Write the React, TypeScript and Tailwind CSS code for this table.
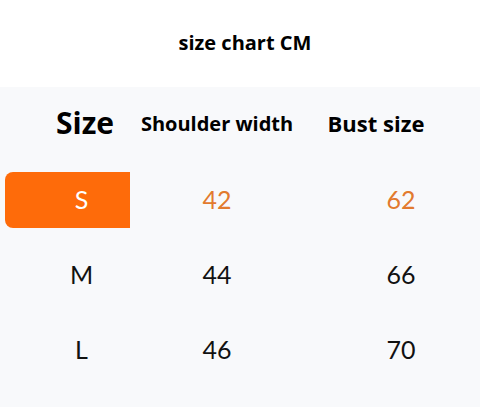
import React from 'react'

const rows = [
  { size: 'S', shoulder: '42', bust: '62', active: true },
  { size: 'M', shoulder: '44', bust: '66', active: false },
  { size: 'L', shoulder: '46', bust: '70', active: false },
]

export default function App() {
  return (
    <div className="w-[480px] h-[407px] bg-white overflow-hidden font-['Open_Sans',sans-serif]">
      {/* Title */}
      <div className="h-[87px] flex items-center justify-center pb-[2px]">
        <h1 className="text-[20px] font-bold text-black pl-[10px]">size chart CM</h1>
      </div>

      {/* Table */}
      <div className="h-[320px] bg-[#f8f9fb] pt-[8px] flex flex-col gap-[19px]">
        <div className="flex h-[55px] mb-[3px] items-center text-black font-bold whitespace-nowrap">
          <div className="w-[166px] flex justify-center pl-[4px] text-[30px]">Size</div>
          <div className="w-[102px] flex justify-center text-[20px] pt-[2px]">Shoulder width</div>
          <div className="w-[212px] flex justify-center pl-[4px] text-[22px] pt-[2px]">Bust size</div>
        </div>

        {rows.map((row) => (
          <div
            key={row.size}
            className="flex h-[56px] items-center font-['Lato',sans-serif] text-[25px] text-[#111]"
          >
            <div className="w-[166px] h-full flex items-center">
              <div
                className={
                  row.active
                    ? 'ml-[5px] w-[125px] h-full rounded-l-[8px] bg-[#fe6b0a] text-white flex items-center justify-center pl-[28px]'
                    : 'ml-[5px] w-[125px] h-full flex items-center justify-center pl-[28px]'
                }
              >
                {row.size}
              </div>
            </div>
            <div className={row.active ? 'w-[102px] flex justify-center text-[#e27a2e]' : 'w-[102px] flex justify-center'}>
              {row.shoulder}
            </div>
            <div
              className={
                row.active
                  ? 'w-[212px] flex justify-center pl-[54px] text-[#e27a2e]'
                  : 'w-[212px] flex justify-center pl-[54px]'
              }
            >
              {row.bust}
            </div>
          </div>
        ))}
      </div>
    </div>
  )
}
